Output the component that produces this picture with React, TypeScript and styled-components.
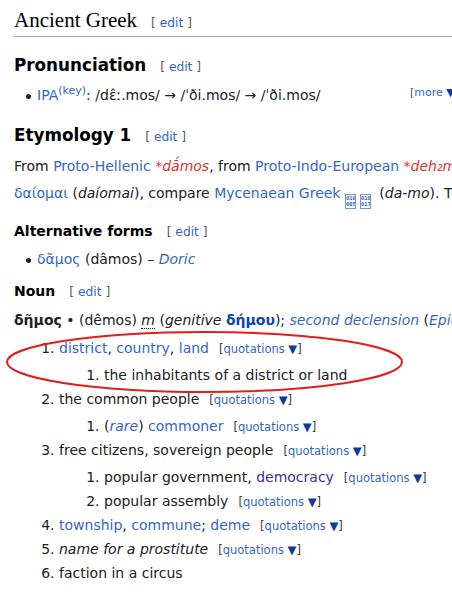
import styled, { createGlobalStyle } from "styled-components";

const GlobalStyle = createGlobalStyle`
  html, body {
    margin: 0;
    padding: 0;
    background: #ffffff;
  }
  body {
    width: 452px;
    height: 592px;
    overflow: hidden;
    font-family: "DejaVu Sans", sans-serif;
    font-size: 14px;
    color: #202122;
  }
`;

const Page = styled.main`
  position: relative;
  width: 445px;
  padding: 7px 0 0 14px;
`;

const LangHeading = styled.h2`
  margin: 0;
  padding-bottom: 3px;
  border-bottom: 1px solid #a2a9b1;
  font-family: "Liberation Serif", serif;
  font-weight: normal;
  font-size: 21px;
  line-height: 26px;
  color: #000;
  white-space: nowrap;
`;

const SectionHeading = styled.h3<{ $top: number }>`
  margin: ${(p) => p.$top}px 0 0;
  font-size: 16.8px;
  line-height: 24px;
  font-weight: bold;
  color: #000;
`;

const SubHeading = styled.h4<{ $top: number }>`
  margin: ${(p) => p.$top}px 0 0;
  font-size: 14px;
  line-height: 22px;
  font-weight: bold;
  color: #000;
`;

const EditSection = styled.span`
  margin-left: 14px;
  font-family: "DejaVu Sans", sans-serif;
  font-size: 12.25px;
  line-height: 1;
  font-weight: normal;
  color: #54595d;
`;

const Link = styled.a<{ $tone?: "new" | "visited" | "strong" }>`
  text-decoration: none;
  color: ${(p) =>
    p.$tone === "new"
      ? "#dd3333"
      : p.$tone === "visited"
      ? "#4b2a9a"
      : p.$tone === "strong"
      ? "#0645ad"
      : "#3366cc"};
`;

const Bullets = styled.ul<{ $top: number }>`
  list-style: none;
  margin: ${(p) => p.$top}px 0 0;
  padding-left: 12px;
  line-height: 22px;

  li {
    white-space: nowrap;
  }

  li::before {
    content: "";
    display: inline-block;
    width: 5px;
    height: 5px;
    border-radius: 50%;
    background: #202122;
    margin-right: 6px;
    vertical-align: middle;
  }
`;

const Key = styled.sup`
  font-size: 11px;
  line-height: 1;
  vertical-align: 6px;
`;

const More = styled.span`
  float: right;
  font-size: 11px;
  line-height: 18px;
  color: #54595d;
`;

const Paragraph = styled.p`
  margin: 6px 0 0;
  line-height: 27px;
`;

const Line = styled.span`
  display: block;
  white-space: nowrap;
`;

/* missing-glyph boxes, as the reference shows them */
const Tofu = styled.span`
  display: inline-flex;
  flex-direction: column;
  justify-content: center;
  box-sizing: border-box;
  width: 11px;
  height: 15px;
  margin-right: 4px;
  border: 1px solid #6f93dc;
  overflow: hidden;
  vertical-align: -2px;
  font-family: "DejaVu Sans Mono", monospace;
  font-size: 5.5px;
  line-height: 5.5px;
  font-weight: bold;
  text-align: center;
  color: #3366cc;
`;

const Headword = styled.p`
  margin: 7px 0 0;
  line-height: 22px;
  white-space: nowrap;
`;

const Gender = styled.abbr`
  font-style: italic;
  text-decoration: none;
  border-bottom: 1px dotted #202122;
`;

const Senses = styled.ol`
  margin: 6px 0 0;
  padding-left: 45px;
  line-height: 22px;

  li {
    margin-bottom: 2px;
    white-space: nowrap;
  }

  & & {
    margin-top: 5px;
  }
`;

const Quotations = styled.span`
  margin-left: 10px;
  font-size: 11.5px;
  line-height: 1;
  color: #3c3a36;
`;

const Arrow = styled.span`
  color: #0b3a9e;
`;

const Circle = styled.svg`
  position: absolute;
  left: 5px;
  top: 329px;
  pointer-events: none;
`;

function Edit() {
  return (
    <EditSection>
      [ <Link href="#">edit</Link> ]
    </EditSection>
  );
}

function Quotes() {
  return (
    <Quotations>
      [<Link href="#">quotations</Link> <Arrow>▼</Arrow>]
    </Quotations>
  );
}

function MissingGlyph({ char, code }: { char: string; code: string }) {
  return (
    <Tofu title={char}>
      <span>{code.slice(0, 3)}</span>
      <span>{code.slice(3)}</span>
    </Tofu>
  );
}

export default function App() {
  return (
    <>
      <GlobalStyle />
      <Page>
        <LangHeading>
          Ancient Greek
          <Edit />
        </LangHeading>

        <SectionHeading $top={16}>
          Pronunciation
          <Edit />
        </SectionHeading>
        <Bullets $top={7}>
          <li>
            <More>
              [<Link href="#">more</Link> <Arrow>▼</Arrow>]
            </More>
            <Link href="#">IPA</Link>
            <Key>
              <Link href="#">(key)</Link>
            </Key>
            : /dɛ̂ː.mos/ → /ˈði.mos/ → /ˈði.mos/
          </li>
        </Bullets>

        <SectionHeading $top={17}>
          Etymology 1
          <Edit />
        </SectionHeading>
        <Paragraph>
          <Line>
            From <Link href="#">Proto-Hellenic</Link>{" "}
            <Link href="#" $tone="new">
              <i>*dā́mos</i>
            </Link>
            , from <Link href="#">Proto-Indo-European</Link>{" "}
            <Link href="#" $tone="new">
              <i>*deh₂mos</i>
            </Link>
            , from <i>*deh₂-</i> (“to divide”)
          </Line>
          <Line>
            <Link href="#">δαίομαι</Link> (<i>daíomai</i>), compare{" "}
            <Link href="#">Mycenaean Greek</Link>{" "}
            <MissingGlyph char="𐀅" code="010005" />
            <MissingGlyph char="𐀗" code="010017" /> (<i>da-mo</i>). The sense is old.
          </Line>
        </Paragraph>

        <SubHeading $top={11}>
          Alternative forms
          <Edit />
        </SubHeading>
        <Bullets $top={6}>
          <li>
            <Link href="#">δᾶμος</Link> (dâmos) –{" "}
            <Link href="#">
              <i>Doric</i>
            </Link>
          </li>
        </Bullets>

        <SubHeading $top={10}>
          Noun
          <Edit />
        </SubHeading>
        <Headword>
          <b>δῆμος</b> • (dêmos) <Gender title="masculine gender">m</Gender> (
          <i>genitive</i>{" "}
          <Link href="#" $tone="strong">
            <b>δήμου</b>
          </Link>
          );{" "}
          <Link href="#">
            <i>second declension</i>
          </Link>{" "}
          (
          <Link href="#">
            <i>Epic</i>
          </Link>
          )
        </Headword>

        <Senses>
          <li>
            <Link href="#">district</Link>, <Link href="#">country</Link>,{" "}
            <Link href="#">land</Link>
            <Quotes />
            <Senses>
              <li>the inhabitants of a district or land</li>
            </Senses>
          </li>
          <li>
            the common people
            <Quotes />
            <Senses>
              <li>
                (
                <Link href="#">
                  <i>rare</i>
                </Link>
                ) <Link href="#">commoner</Link>
                <Quotes />
              </li>
            </Senses>
          </li>
          <li>
            free citizens, sovereign people
            <Quotes />
            <Senses>
              <li>
                popular government,{" "}
                <Link href="#" $tone="visited">
                  democracy
                </Link>
                <Quotes />
              </li>
              <li>
                popular assembly
                <Quotes />
              </li>
            </Senses>
          </li>
          <li>
            <Link href="#">township</Link>, <Link href="#">commune</Link>;{" "}
            <Link href="#">deme</Link>
            <Quotes />
          </li>
          <li>
            <i>name for a prostitute</i>
            <Quotes />
          </li>
          <li>faction in a circus</li>
        </Senses>

        <Circle width="402" height="66" viewBox="0 0 402 66">
          <ellipse
            cx="199.5"
            cy="33"
            rx="197.5"
            ry="30"
            fill="none"
            stroke="#e31c1c"
            strokeWidth="2"
          />
        </Circle>
      </Page>
    </>
  );
}
